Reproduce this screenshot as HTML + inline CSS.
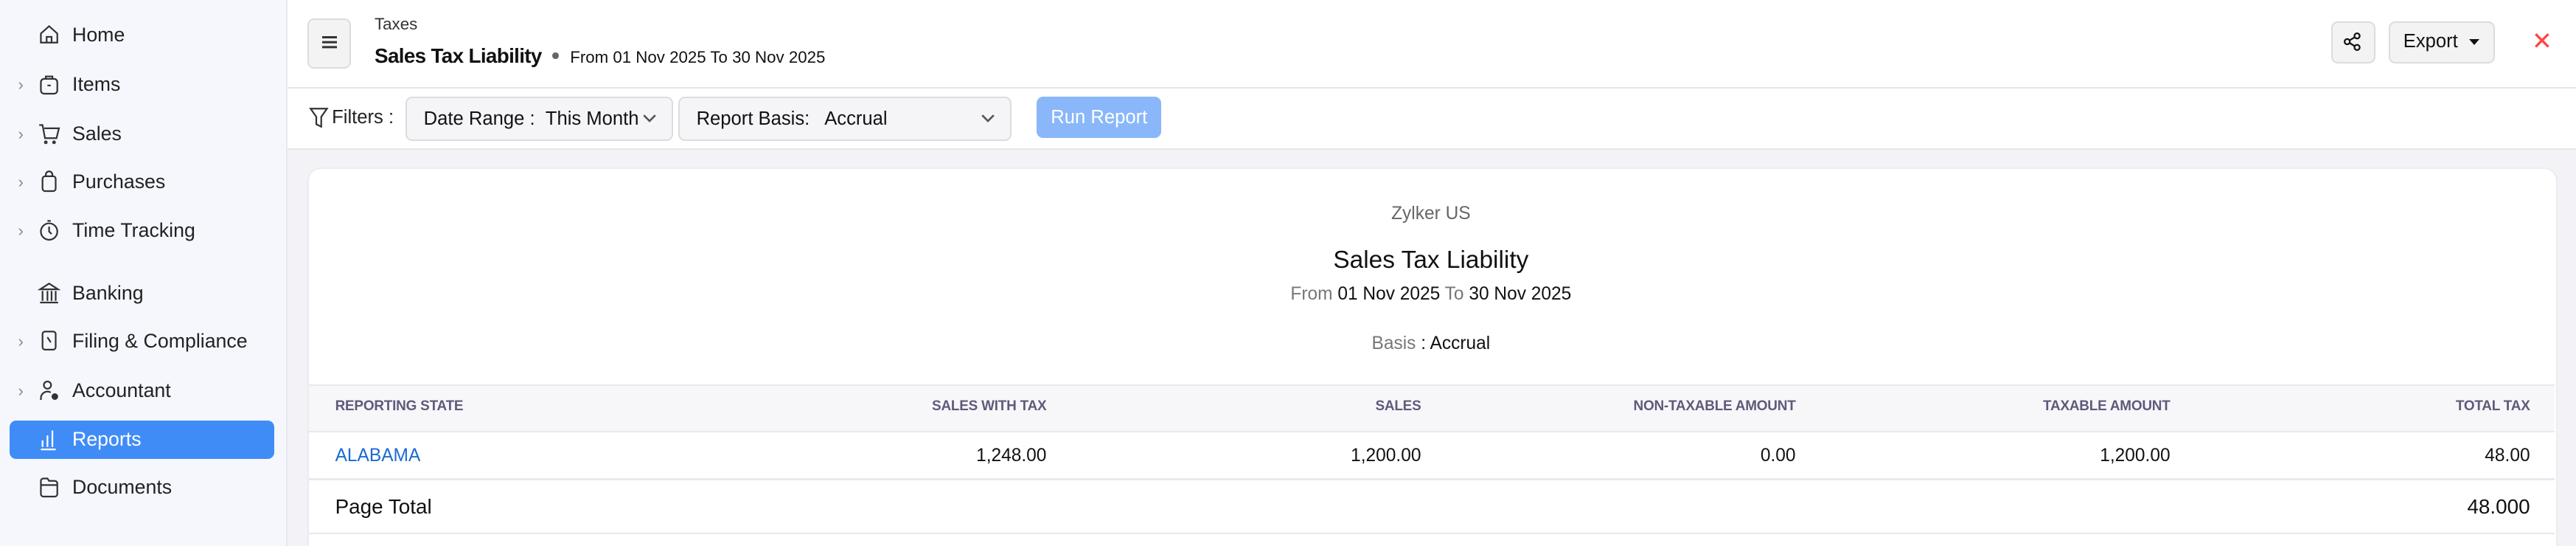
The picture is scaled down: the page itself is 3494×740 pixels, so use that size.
<!DOCTYPE html>
<html><head><meta charset="utf-8"><style>
html,body{margin:0;padding:0;width:3494px;height:740px;overflow:hidden;background:#f3f3f7}
#r{zoom:2.22832;width:1568px;height:332px;position:relative;font-family:"Liberation Sans",sans-serif;color:#111;overflow:hidden}
.a{position:absolute;white-space:nowrap}
#side{left:0;top:0;width:174px;height:332px;background:#f6f7fd;border-right:1px solid #e8e8ee}
.nav{position:absolute;left:6px;width:161px;height:23px;font-size:12px;color:#222;line-height:23px}
.nav .t{position:absolute;left:38px}
.nav svg{position:absolute;left:17px;top:4px}
.nav .c{position:absolute;left:5px;top:0;color:#888;font-size:10px}
.act{background:#408cf7;border-radius:4px;color:#fff}
.btn{background:#f3f3f4;border:1px solid #dcdcdf;border-radius:4px}
.th{top:234px;height:27px;line-height:27px;font-size:8.5px;color:#5e5a7a;font-weight:bold;letter-spacing:-0.1px}
.td{top:262px;height:29px;line-height:29px;font-size:11px}
</style></head><body><div id="r">
<div class="a" id="side"></div>
<div class="nav" style="top:10px"><svg width="14" height="14" viewBox="0 0 14 14" fill="none" stroke="#333" stroke-width="1"><path d="M2 6.5 7 2l5 4.5V12H2z M5.5 12V8.5h3V12"/></svg><span class="t">Home</span></div>
<div class="nav" style="top:40px"><span class="c">›</span><svg width="14" height="14" viewBox="0 0 14 14" fill="none" stroke="#333"><rect x="2" y="4" width="10" height="9" rx="2"/><path d="M5 4V2.5h4V4M6 8h2"/></svg><span class="t">Items</span></div>
<div class="nav" style="top:70px"><span class="c">›</span><svg width="14" height="14" viewBox="0 0 14 14" fill="none" stroke="#333"><path d="M1 2h2l1.5 8h7L13 4H4"/><circle cx="5" cy="12.5" r=".6"/><circle cx="10" cy="12.5" r=".6"/></svg><span class="t">Sales</span></div>
<div class="nav" style="top:99px"><span class="c">›</span><svg width="14" height="14" viewBox="0 0 14 14" fill="none" stroke="#333"><rect x="3" y="4" width="8" height="9" rx="1.5"/><path d="M5 4V3a2 2 0 0 1 4 0v1"/></svg><span class="t">Purchases</span></div>
<div class="nav" style="top:129px"><span class="c">›</span><svg width="14" height="14" viewBox="0 0 14 14" fill="none" stroke="#333"><circle cx="7" cy="8" r="5"/><path d="M6 1.5h2M7 5v3l1.5 1.5"/></svg><span class="t">Time Tracking</span></div>
<div class="nav" style="top:167px"><svg width="14" height="14" viewBox="0 0 14 14" fill="none" stroke="#333"><path d="M1.5 5 7 1.5 12.5 5zM3 6v6M6 6v6M8.5 6v6M11 6v6M1.5 13h11"/></svg><span class="t">Banking</span></div>
<div class="nav" style="top:196px"><span class="c">›</span><svg width="14" height="14" viewBox="0 0 14 14" fill="none" stroke="#333"><rect x="3" y="1.5" width="8" height="11" rx="1.5"/><path d="M6 5l2 3M6 5h.1M8 8h.1"/></svg><span class="t">Filing &amp; Compliance</span></div>
<div class="nav" style="top:226px"><span class="c">›</span><svg width="14" height="14" viewBox="0 0 14 14" fill="none" stroke="#333"><circle cx="6" cy="4" r="2.2"/><path d="M2 13v-1a4 4 0 0 1 6-3.5"/><circle cx="10.5" cy="11" r="1.5" fill="#333"/></svg><span class="t">Accountant</span></div>
<div class="nav act" style="top:256px"><svg width="14" height="14" viewBox="0 0 14 14" fill="none" stroke="#fff"><path d="M3 12V8M6 12V5M9 12V2M2 13.5h9"/></svg><span class="t">Reports</span></div>
<div class="nav" style="top:285px"><svg width="14" height="14" viewBox="0 0 14 14" fill="none" stroke="#333"><path d="M2 3.5A1.5 1.5 0 0 1 3.5 2H6l1 1.5h3.5A1.5 1.5 0 0 1 12 5v6.5A1.5 1.5 0 0 1 10.5 13h-7A1.5 1.5 0 0 1 2 11.5zM2 6h10"/></svg><span class="t">Documents</span></div>

<div class="a" style="left:175px;top:0;width:1393px;height:90px;background:#fff;border-bottom:1px solid #e6e6ea"></div>
<div class="a" style="left:175px;top:53px;width:1393px;height:1px;background:#e6e6ea"></div>
<div class="a btn" style="left:187px;top:11px;width:25px;height:29px"><div class="a" style="left:8px;top:10px;width:9px;height:1.6px;background:#333;box-shadow:0 3px 0 #333,0 6px 0 #333"></div></div>
<div class="a" style="left:228px;top:9px;font-size:10px;color:#333">Taxes</div>
<div class="a" style="left:228px;top:27px;font-size:12.5px;font-weight:bold;color:#111;letter-spacing:-0.3px">Sales Tax Liability</div>
<div class="a" style="left:336px;top:32px;width:4px;height:4px;border-radius:50%;background:#666"></div>
<div class="a" style="left:347px;top:29px;font-size:10px">From 01 Nov 2025 To 30 Nov 2025</div>
<div class="a btn" style="left:1419px;top:13px;width:25px;height:24px"><svg class="a" style="left:6px;top:5px" width="13" height="13" viewBox="0 0 13 13" fill="none" stroke="#111" stroke-width="1"><circle cx="3" cy="6.5" r="1.6"/><circle cx="9" cy="3" r="1.6"/><circle cx="9" cy="10" r="1.6"/><path d="M4.4 5.7 7.6 3.8M4.4 7.3l3.2 1.9"/></svg></div>
<div class="a btn" style="left:1454px;top:13px;width:63px;height:24px"><span class="a" style="left:8px;top:5px;font-size:11.5px">Export</span><span class="a" style="left:48px;top:10px;border:3.5px solid transparent;border-top:4px solid #111"></span></div>
<div class="a" style="left:1541px;top:18px;font-size:15px;color:#f44;line-height:15px">✕</div>

<svg class="a" style="left:188px;top:65px" width="12" height="13" viewBox="0 0 12 13" fill="none" stroke="#333"><path d="M1 1h10L7.5 6v6L4.5 10.5V6z"/></svg>
<div class="a" style="left:202px;top:65px;font-size:11.5px;color:#222">Filters :</div>
<div class="a btn" style="left:247px;top:59px;width:161px;height:25px;background:#f5f5f8"><span class="a" style="left:10px;top:6px;font-size:11.5px">Date Range :&nbsp;&nbsp;This Month</span><svg class="a" style="left:143px;top:9px" width="9" height="6" viewBox="0 0 9 6" fill="none" stroke="#555" stroke-width="1.2"><path d="M1 1l3.5 3.5L8 1"/></svg></div>
<div class="a btn" style="left:413px;top:59px;width:201px;height:25px;background:#f5f5f8"><span class="a" style="left:10px;top:6px;font-size:11.5px">Report Basis:&nbsp;&nbsp; Accrual</span><svg class="a" style="left:183px;top:9px" width="9" height="6" viewBox="0 0 9 6" fill="none" stroke="#555" stroke-width="1.2"><path d="M1 1l3.5 3.5L8 1"/></svg></div>
<div class="a" style="left:631px;top:59px;width:76px;height:25px;background:#89b7f9;border-radius:4px;color:#fff;font-size:11.5px;text-align:center;line-height:26px">Run Report</div>

<div class="a" style="left:187px;top:102px;width:1368px;height:240px;background:#fff;border-radius:8px;border:1px solid #ececf0"></div>
<div class="a" style="left:187px;top:124px;width:1368px;text-align:center;font-size:11px;color:#666">Zylker US</div>
<div class="a" style="left:187px;top:150px;width:1368px;text-align:center;font-size:15px;color:#111">Sales Tax Liability</div>
<div class="a" style="left:187px;top:173px;width:1368px;text-align:center;font-size:11px"><span style="color:#777">From</span> 01 Nov 2025 <span style="color:#777">To</span> 30 Nov 2025</div>
<div class="a" style="left:187px;top:203px;width:1368px;text-align:center;font-size:11px"><span style="color:#777">Basis</span> : Accrual</div>
<div class="a" style="left:188px;top:234px;width:1367px;height:27px;background:#f7f7fa;border-top:1px solid #e8e8ee;border-bottom:1px solid #e8e8ee"></div>
<div class="a th" style="left:204px">REPORTING STATE</div>
<div class="a th" style="right:931px">SALES WITH TAX</div>
<div class="a th" style="right:703px">SALES</div>
<div class="a th" style="right:475px">NON-TAXABLE AMOUNT</div>
<div class="a th" style="right:247px">TAXABLE AMOUNT</div>
<div class="a th" style="right:28px">TOTAL TAX</div>
<div class="a td" style="left:204px;top:263px;color:#1b6ad6">ALABAMA</div>
<div class="a td" style="right:931px;top:263px">1,248.00</div>
<div class="a td" style="right:703px;top:263px">1,200.00</div>
<div class="a td" style="right:475px;top:263px">0.00</div>
<div class="a td" style="right:247px;top:263px">1,200.00</div>
<div class="a td" style="right:28px;top:263px">48.00</div>
<div class="a" style="left:188px;top:291px;width:1367px;height:1px;background:#e8e8ee"></div>
<div class="a" style="left:204px;top:301px;font-size:12.5px">Page Total</div>
<div class="a" style="right:28px;top:301px;font-size:12.5px">48.000</div>
<div class="a" style="left:188px;top:324px;width:1367px;height:1px;background:#e8e8ee"></div>
</div></body></html>
